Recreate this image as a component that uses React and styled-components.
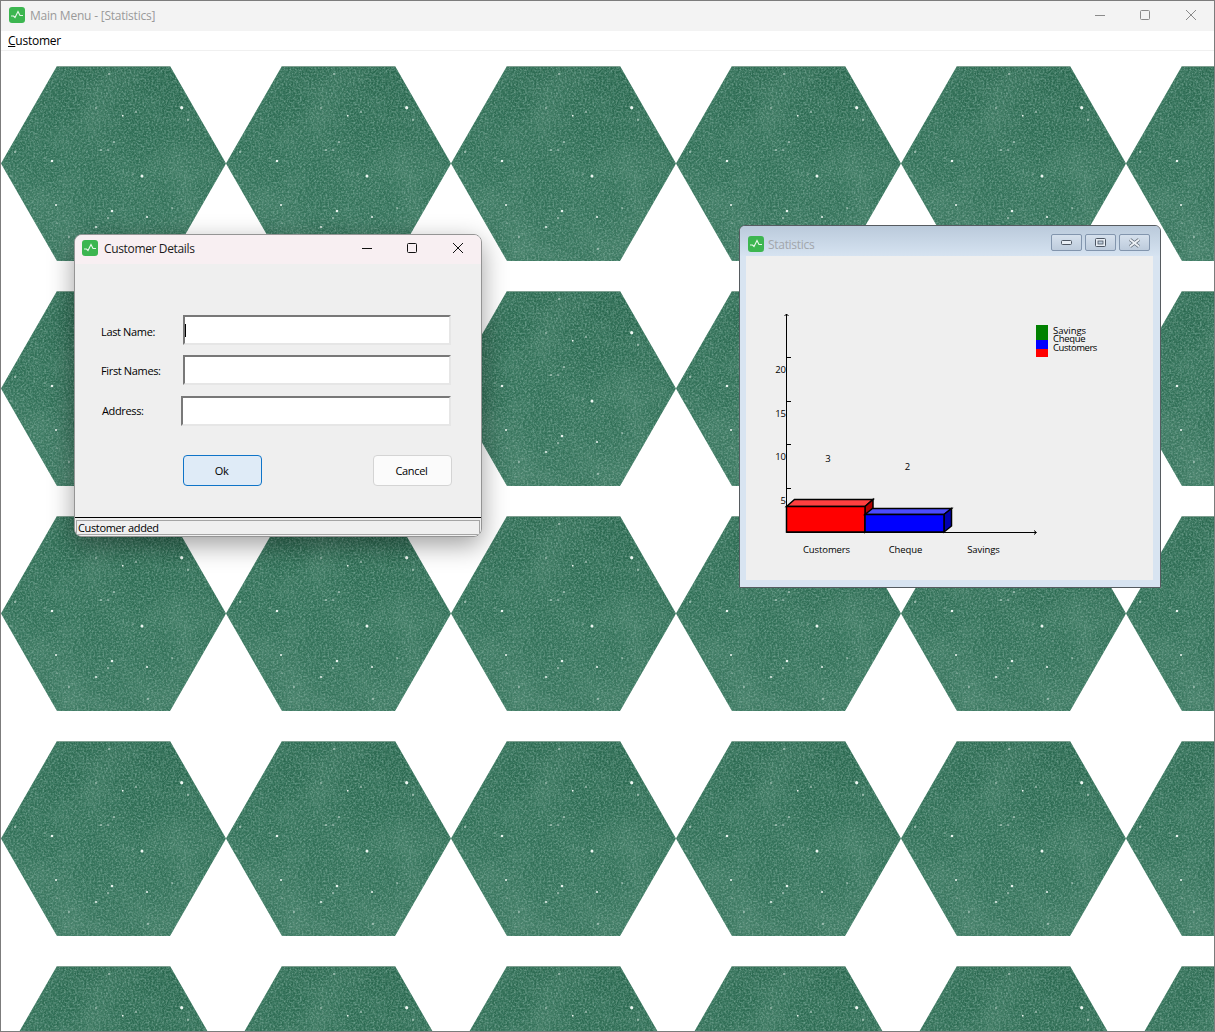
import styled, { createGlobalStyle } from 'styled-components';

const specks = [
  [180.7, 41.7, 1.6], [187, 54, 0.8], [135, 46, 0.8], [121.7, 49.7, 0.9], [95, 42, 0.7],
  [108, 8, 0.8], [113, 76, 0.8], [100, 84, 0.8], [107, 84, 0.7], [141, 110, 1.5],
  [132, 108, 0.6], [51, 95, 1.3], [44, 92, 0.6], [14, 86, 0.8], [55, 139, 1],
  [111, 145, 1.2], [107, 152, 0.8], [146, 151, 1], [95, 161, 1], [68, 171, 0.7],
  [147, 183, 0.8], [56, 157, 0.6], [171, 142, 0.7], [152, 125, 0.5], [10, 110, 0.5],
];

const tile = `<svg xmlns="http://www.w3.org/2000/svg" width="225" height="225">
<defs>
<clipPath id="h"><polygon points="0,97.5 56,0 169,0 225,97.5 169,195 56,195"/></clipPath>
<linearGradient id="s" x1="0.8" y1="0" x2="0.6" y2="1"><stop offset="0" stop-color="#28664d"/><stop offset="0.55" stop-color="#2f6e55"/><stop offset="1" stop-color="#37745c"/></linearGradient>
<filter id="l" x="0" y="0" width="100%" height="100%"><feTurbulence type="fractalNoise" baseFrequency="0.55" numOctaves="2" seed="4"/><feColorMatrix values="0 0 0 0 0.5 0 0 0 0 0.7 0 0 0 0 0.62 2.6 0 0 0 -1.1"/></filter>
<filter id="d" x="0" y="0" width="100%" height="100%"><feTurbulence type="fractalNoise" baseFrequency="0.5" numOctaves="2" seed="9"/><feColorMatrix values="0 0 0 0 0.08 0 0 0 0 0.26 0 0 0 0 0.18 2.6 0 0 0 -1.1"/></filter>
<filter id="b" x="0" y="0" width="100%" height="100%"><feTurbulence type="fractalNoise" baseFrequency="0.025" numOctaves="3" seed="12"/><feColorMatrix values="0 0 0 0 0.45 0 0 0 0 0.65 0 0 0 0 0.56 1.8 0 0 0 -0.75"/></filter>
</defs>
<g clip-path="url(#h)">
<rect width="225" height="195" fill="url(#s)"/>
<rect width="225" height="195" filter="url(#b)" opacity="0.15"/>
<rect width="225" height="195" filter="url(#d)" opacity="0.8"/>
<rect width="225" height="195" filter="url(#l)" opacity="0.35"/>
<rect x="56" width="113" height="1" fill="#7f9f90"/>
${specks.map(([x, y, r]) => `<circle cx="${x}" cy="${y}" r="${r}" fill="#eef7f2"/>`).join('')}
</g></svg>`;

const UI_FONT = `"Open Sans", "Noto Sans", Arial, sans-serif`;

const GlobalStyle = createGlobalStyle`
  html, body {
    margin: 0;
    padding: 0;
    background: white;
  }
  body {
    font-family: ${UI_FONT};
    font-size: 12px;
    color: #000;
  }
`;

const MainWindow = styled.div`
  width: 1215px;
  height: 1032px;
  box-sizing: border-box;
  border: 1px solid #7c7c7c;
  display: flex;
  flex-direction: column;
  overflow: hidden;
`;

const MainTitleBar = styled.div`
  height: 30px;
  flex: none;
  box-sizing: border-box;
  background: #f3f3f3;
  display: flex;
  align-items: center;
  padding: 0 0 2px 8px;
`;

const TitleText = styled.span`
  flex: 1;
  margin-left: ${p => p.$gap}px;
  font-size: 12px;
  letter-spacing: ${p => p.$spacing}px;
  white-space: nowrap;
  color: ${p => p.$color};
`;

const MenuBar = styled.div`
  height: 20px;
  flex: none;
  box-sizing: border-box;
  background: #fff;
  border-bottom: 1px solid #f0f0f0;
  padding-left: 7px;
  line-height: 19px;
  font-size: 12px;
  letter-spacing: -0.25px;
`;

const Desktop = styled.main`
  flex: 1;
  position: relative;
  background-color: #fff;
  background-image: url("data:image/svg+xml,${encodeURIComponent(tile)}");
  background-repeat: repeat;
  background-position: 0 15px;
`;

const CaptionButton = styled.div`
  width: ${p => p.$width}px;
  height: 100%;
  flex: none;
  display: flex;
  align-items: center;
  justify-content: center;
  color: ${p => p.$color};
`;

const Dialog = styled.section`
  position: absolute;
  left: 73px;
  top: 183px;
  width: 408px;
  height: 303px;
  box-sizing: border-box;
  border: 1px solid #949494;
  border-radius: 8px;
  overflow: hidden;
  background: #efefef;
  display: flex;
  flex-direction: column;
`;

const DialogShadow = styled.div`
  position: absolute;
  left: 73px;
  top: 183px;
  width: 408px;
  height: 303px;
  border-radius: 8px;
  box-shadow: 0 8px 26px rgba(0, 0, 0, 0.38);
`;

const DialogTitleBar = styled.div`
  height: 29px;
  flex: none;
  box-sizing: border-box;
  background: #f8eff2;
  display: flex;
  align-items: center;
  padding: 0 0 3px 7px;
`;

const Form = styled.div`
  flex: 1;
  padding: 51px 30px 0 26px;
`;

const Row = styled.div`
  display: flex;
  align-items: center;
  margin-bottom: ${p => p.$after}px;
`;

const Label = styled.label`
  width: ${p => p.$width}px;
  flex: none;
  font-size: 11px;
  letter-spacing: -0.35px;
  box-sizing: border-box;
  padding: ${p => p.$nudge || '0'};
`;

const FieldBox = styled.div`
  position: relative;
  flex: 1;
`;

const Field = styled.input`
  display: block;
  width: 100%;
  height: 30px;
  box-sizing: border-box;
  padding: 0;
  outline: none;
  background: #fff;
  border-style: solid;
  border-width: 2px;
  border-color: #787878 #e6e6e6 #e6e6e6 #787878;
`;

const Caret = styled.span`
  position: absolute;
  left: 2px;
  top: 9px;
  width: 1px;
  height: 13px;
  background: #000;
`;

const Buttons = styled.div`
  display: flex;
  justify-content: space-between;
  margin: 29px -1px 0 82px;
`;

const Button = styled.button`
  width: 79px;
  height: 31px;
  box-sizing: border-box;
  padding: 0 2px 0 0;
  border-radius: 4px;
  font-family: ${UI_FONT};
  font-size: 11px;
  letter-spacing: -0.3px;
  color: #000;
  background: ${p => (p.$primary ? '#dfebf7' : '#fbfbfb')};
  border: 1px solid ${p => (p.$primary ? '#0f74c8' : '#d4d4d4')};
`;

const StatusBar = styled.div`
  flex: none;
  height: 20px;
  box-sizing: border-box;
  margin: 0 -1px -1px -1px;
  border: 1px solid #000;
  border-radius: 0 0 6px 6px;
  padding: 2px 1px 1px 1px;
  background: #efefef;
`;

const StatusText = styled.div`
  height: 100%;
  box-sizing: border-box;
  border: 1px solid #a4a4a4;
  padding-left: 1px;
  line-height: 14px;
  font-size: 11px;
  letter-spacing: -0.35px;
  white-space: nowrap;
`;

const ChildWindow = styled.section`
  position: absolute;
  left: 738px;
  top: 174px;
  width: 422px;
  height: 363px;
  box-sizing: border-box;
  border: 1px solid #565b60;
  border-radius: 6px 6px 0 0;
  background: #d8e4f1;
  display: flex;
  flex-direction: column;
`;

const ChildTitleBar = styled.div`
  height: 30px;
  flex: none;
  box-sizing: border-box;
  background: linear-gradient(#bacadb, #d6e3f1);
  border-radius: 5px 5px 0 0;
  display: flex;
  align-items: center;
  padding: 6px 10px 0 8px;
`;

const ChildButtons = styled.div`
  display: flex;
  gap: 3px;
  margin-top: -3px;
`;

const ChildButton = styled.div`
  width: 31px;
  height: 17px;
  box-sizing: border-box;
  border: 1px solid #8295ad;
  border-radius: 2px;
  background: linear-gradient(#d6e1ed, #bdcbdc);
  display: flex;
  align-items: center;
  justify-content: center;
`;

const ChildBody = styled.div`
  flex: 1;
  margin: 0 7px 7px 6px;
  background: #efefef;
`;

const ChartSvg = styled.svg`
  display: block;
  width: 407px;
  height: 324px;
  font-family: ${UI_FONT};
  font-size: 9.5px;
  fill: #000;
`;

function AppIcon() {
  return (
    <svg width="16" height="16" viewBox="0 0 16 16" style={{ flex: 'none' }}>
      <rect width="16" height="16" rx="3" fill="#3cb650" />
      <path d="M2 9H4.5L6 10.5L9 4.5L11 8.5H14" fill="none" stroke="#e8f7ea" strokeWidth="1.1" />
    </svg>
  );
}

function MinGlyph() {
  return (
    <svg width="10" height="10" viewBox="0 0 10 10">
      <path d="M0 5.5H10" stroke="currentColor" strokeWidth="1" />
    </svg>
  );
}

function MaxGlyph() {
  return (
    <svg width="10" height="10" viewBox="0 0 10 10">
      <rect x="0.5" y="0.5" width="9" height="9" rx="1" fill="none" stroke="currentColor" />
    </svg>
  );
}

function CloseGlyph() {
  return (
    <svg width="10" height="10" viewBox="0 0 10 10">
      <path d="M0 0L10 10M10 0L0 10" stroke="currentColor" strokeWidth="1" />
    </svg>
  );
}

function CaptionButtons({ color }) {
  return (
    <>
      <CaptionButton $width={45} $color={color}><MinGlyph /></CaptionButton>
      <CaptionButton $width={46} $color={color}><MaxGlyph /></CaptionButton>
      <CaptionButton $width={46} $color={color}><CloseGlyph /></CaptionButton>
    </>
  );
}

function Bar({ x, y, w, bottom, depthX, depthY, front, top, side }) {
  const right = x + w;
  const rightSide = `${right},${y} ${right + depthX},${y - depthY} ${right + depthX},${bottom - depthY} ${right},${bottom}`;
  return (
    <g stroke="#000" strokeWidth="1.5">
      <polygon points={`${x},${y} ${x + depthX},${y - depthY} ${right + depthX},${y - depthY} ${right},${y}`} fill={top} />
      <polygon points={rightSide} fill={side} />
      <rect x={x} y={y} width={w} height={bottom - y} fill={front} />
    </g>
  );
}

function Chart() {
  const ticks = [357.5, 401.5, 444.5, 488.5];
  const yLabels = [['20', 370], ['15', 413.5], ['10', 456.5], ['5', 500.5]];
  const xLabels = [['Customers', 826.5], ['Cheque', 905.5], ['Savings', 983.5]];
  const legend = [['Savings', 331, 0], ['Cheque', 339, -0.3], ['Customers', 348, -0.45]];

  return (
    <ChartSvg viewBox="746 256 407 324">
      <Bar x={786.5} y={506.5} w={78.5} bottom={532} depthX={8} depthY={7} front="#ff0000" top="#ff4040" side="#b00000" />
      <Bar x={865} y={514.5} w={79} bottom={532} depthX={7.5} depthY={6} front="#0000ff" top="#4c4cff" side="#0000b0" />

      <path d="M786.5 314V532.5H1036" fill="none" stroke="#000" strokeWidth="1" />
      <path d="M784.5 316L786.5 314L788.5 316M1034 530.5L1036.5 532.5L1034 534.5" fill="none" stroke="#000" strokeWidth="1" />
      {ticks.map(y => <path key={y} d={`M786.5 ${y}H791`} stroke="#000" strokeWidth="1" />)}

      {yLabels.map(([label, y]) => (
        <text key={label} x="786" y={y} dy="3.4" textAnchor="end">{label}</text>
      ))}
      <text x="828" y="459" dy="3.4" textAnchor="middle">3</text>
      <text x="907.5" y="466.5" dy="3.4" textAnchor="middle">2</text>
      {xLabels.map(([label, x]) => (
        <text key={label} x={x} y="549.5" dy="3.4" textAnchor="middle" letterSpacing="-0.1">{label}</text>
      ))}

      <rect x="1036" y="325" width="12" height="15" fill="#008000" />
      <rect x="1036" y="340" width="12" height="9" fill="#0000ff" />
      <rect x="1036" y="349" width="12" height="8" fill="#ff0000" />
      {legend.map(([label, y, spacing]) => (
        <text key={label} x="1053" y={y} dy="3.4" letterSpacing={spacing}>{label}</text>
      ))}
    </ChartSvg>
  );
}

export default function App() {
  return (
    <>
      <GlobalStyle />
      <MainWindow>
        <MainTitleBar>
          <AppIcon />
          <TitleText $gap={5} $spacing={-0.22} $color="#9a9a9a">Main Menu - [Statistics]</TitleText>
          <CaptionButtons color="#8a8a8a" />
        </MainTitleBar>
        <MenuBar><u>C</u>ustomer</MenuBar>
        <Desktop>
          <ChildWindow>
            <ChildTitleBar>
              <AppIcon />
              <TitleText $gap={4} $spacing={-0.3} $color="#a2a6ab">Statistics</TitleText>
              <ChildButtons>
                <ChildButton>
                  <svg width="11" height="5" viewBox="0 0 11 5">
                    <rect x="0.5" y="0.5" width="10" height="4" rx="1" fill="#e8eef5" stroke="#4d5663" />
                  </svg>
                </ChildButton>
                <ChildButton>
                  <svg width="11" height="9" viewBox="0 0 11 9">
                    <rect x="0.5" y="0.5" width="10" height="8" rx="1" fill="#e8eef5" stroke="#4d5663" />
                    <rect x="3" y="3" width="5" height="3" fill="#bccbdb" stroke="#4d5663" strokeWidth="0.8" />
                  </svg>
                </ChildButton>
                <ChildButton>
                  <svg width="13" height="10" viewBox="0 0 13 10">
                    <path d="M2 1.5L11 8.5M11 1.5L2 8.5" stroke="#5a6470" strokeWidth="3.4" />
                    <path d="M2 1.5L11 8.5M11 1.5L2 8.5" stroke="#eef2f7" strokeWidth="2" />
                  </svg>
                </ChildButton>
              </ChildButtons>
            </ChildTitleBar>
            <ChildBody>
              <Chart />
            </ChildBody>
          </ChildWindow>

          <DialogShadow />
          <Dialog>
            <DialogTitleBar>
              <AppIcon />
              <TitleText $gap={6} $spacing={-0.35} $color="#1a1a1a">Customer Details</TitleText>
              <CaptionButtons color="#111" />
            </DialogTitleBar>
            <Form>
              <Row $after={10}>
                <Label $width={82} $nudge="2px 0 0 0">Last Name:</Label>
                <FieldBox><Field readOnly /><Caret /></FieldBox>
              </Row>
              <Row $after={11}>
                <Label $width={82}>First Names:</Label>
                <FieldBox><Field readOnly /></FieldBox>
              </Row>
              <Row $after={0}>
                <Label $width={80} $nudge="0 0 2px 1px">Address:</Label>
                <FieldBox><Field readOnly /></FieldBox>
              </Row>
              <Buttons>
                <Button $primary>Ok</Button>
                <Button>Cancel</Button>
              </Buttons>
            </Form>
            <StatusBar><StatusText>Customer added</StatusText></StatusBar>
          </Dialog>
        </Desktop>
      </MainWindow>
    </>
  );
}
